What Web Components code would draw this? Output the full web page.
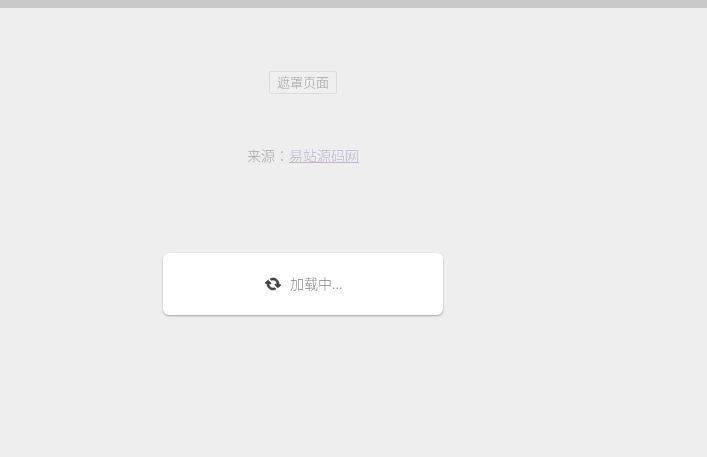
<!DOCTYPE html>
<html lang="zh">
<head>
<meta charset="utf-8">
<title>遮罩页面</title>
<style>
  html, body { margin: 0; height: 100%; background: #eee; }
  body { font: 300 14px "Noto Sans CJK SC", "Liberation Sans", sans-serif; overflow: hidden; }
</style>
</head>
<body>
<demo-page>
  <mask-button>遮罩页面</mask-button>
  <source-line>来源<span style='font-family: "Noto Sans CJK TC", sans-serif'>：</span><a slot="link" href="#">易站源码网</a></source-line>
  <loading-card>加载中...</loading-card>
</demo-page>

<script>
class DemoPage extends HTMLElement {
  constructor() {
    super();
    this.attachShadow({ mode: 'open' });
    this.shadowRoot.innerHTML = `
    <style>
      :host { display: block; height: 457px; background: #eee; }
      #bar { height: 8px; background: #c8c8c8; }
      #content {
        width: 606px;
        display: flex;
        flex-direction: column;
        align-items: center;
        padding-top: 63px;
      }
    </style>
    <div id="bar"></div>
    <div id="content"><slot></slot></div>
    `;
  }
}
customElements.define('demo-page', DemoPage);

class MaskButton extends HTMLElement {
  constructor() {
    super();
    this.attachShadow({ mode: 'open' });
    this.shadowRoot.innerHTML = `
    <style>
      :host {
        display: block;
        box-sizing: border-box;
        width: 68px;
        height: 23px;
        line-height: 19px;
        text-align: center;
        font-size: 13px;
        color: #a0a0a0;
        border: 1px solid #dcdcdc;
        border-radius: 2px;
        background: #efefef;
      }
      span { display: block; will-change: transform; }
    </style>
    <span><slot></slot></span>
    `;
  }
}
customElements.define('mask-button', MaskButton);

class SourceLine extends HTMLElement {
  constructor() {
    super();
    this.attachShadow({ mode: 'open' });
    this.shadowRoot.innerHTML = `
    <style>
      :host {
        display: flex;
        margin-top: 51px;
        height: 20px;
        line-height: 20px;
        font-size: 14px;
        color: #a8a8a8;
        will-change: transform;
      }
      ::slotted(a) { color: #bdb3cf; text-decoration: underline; }
    </style>
    <slot></slot><slot name="link"></slot>
    `;
  }
}
customElements.define('source-line', SourceLine);

class LoadingCard extends HTMLElement {
  constructor() {
    super();
    this.attachShadow({ mode: 'open' });
    this.shadowRoot.innerHTML = `
    <style>
      :host {
        display: flex;
        align-items: center;
        justify-content: center;
        gap: 10px;
        box-sizing: border-box;
        width: 280px;
        height: 62px;
        margin-top: 88px;
        padding-left: 2px;
        background: #fff;
        border-radius: 6px;
        box-shadow: 0 1px 2px rgba(0, 0, 0, .32);
        font-size: 14px;
        color: #858585;
      }
      svg { width: 14px; height: 14px; fill: #444; stroke: #444; stroke-width: 80; transform: rotate(50deg); }
      span { margin-top: -2px; will-change: transform; }
    </style>
    <svg viewBox="0 0 1536 1792"><path d="M1511 1056q0 5-1 7-64 268-268 434.5t-478 166.5q-146 0-282.5-55t-243.5-157l-129 129q-19 19-45 19t-45-19-19-45v-448q0-26 19-45t45-19h448q26 0 45 19t19 45-19 45l-137 137q71 66 161 102t187 36q134 0 250-65t186-179q11-17 53-117 8-23 30-23h192q13 0 22.5 9.5t9.5 22.5zm25-800v448q0 26-19 45t-45 19h-448q-26 0-45-19t-19-45 19-45l138-138q-148-137-349-137-134 0-250 65t-186 179q-11 17-53 117-8 23-30 23h-199q-13 0-22.5-9.5t-9.5-22.5v-7q65-268 270-434.5t480-166.5q146 0 284 55.5t245 156.5l130-129q19-19 45-19t45 19 19 45z"/></svg>
    <span><slot></slot></span>
    `;
  }
}
customElements.define('loading-card', LoadingCard);
</script>
</body>
</html>
